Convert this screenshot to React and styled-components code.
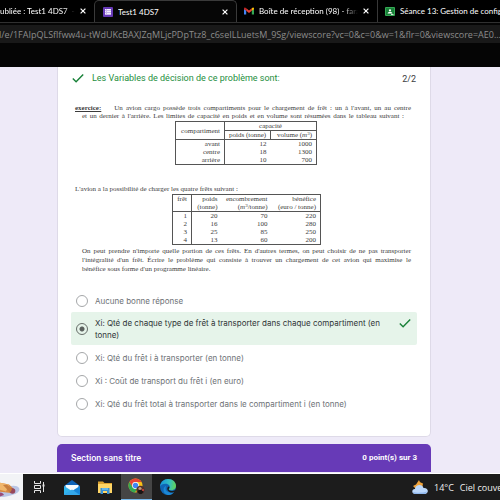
import React from "react";
import styled, { createGlobalStyle, css } from "styled-components";

const Global = createGlobalStyle`
  *, *::before, *::after { box-sizing: border-box; }
  body { margin: 0; background: #eeeaf8; font-family: Roboto, "Liberation Sans", sans-serif; }
  button { font: inherit; color: inherit; background: none; border: 0; padding: 0; }
  h1, h2, p { margin: 0; font-weight: 400; }
  svg { display: block; flex: none; }
`;

const Screen = styled.div`
  display: flex;
  flex-direction: column;
  min-height: 100vh;
  overflow: hidden;
`;

/* Browser chrome */
const Chrome = styled.header`
  flex: none;
  height: 67px;
  background: #050505;
  font-family: Lato, "Open Sans", sans-serif;
`;
const TabStrip = styled.nav`
  display: flex;
  height: 23px;
  overflow: hidden;
  background: #000;
  border-bottom: 1px solid #303030;
`;
const Tab = styled.div`
  display: flex;
  align-items: center;
  flex: none;
  width: ${(p) => p.$width}px;
  height: 23px;
  gap: 5px;
  padding: 0 ${(p) => p.$end ?? 8}px 1px ${(p) => p.$start ?? 8}px;
  color: #fff;
  ${(p) =>
    p.$active &&
    css`
      background: #060606;
      border: 1px solid #3a3a3a;
      border-bottom: 0;
      border-radius: 5px 5px 0 0;
    `}
  ${(p) => p.$divided && css`border-right: 1px solid #383838;`}
`;
const TabLabel = styled.button`
  flex: 1;
  min-width: 0;
  overflow: hidden;
  text-align: left;
  white-space: nowrap;
  font-size: 8px;
  line-height: 12px;
  ${(p) => p.$fade && css`mask-image: linear-gradient(90deg, #000 85%, transparent);`}
`;
const CloseButton = styled.button`
  display: flex;
  flex: none;
`;
const Address = styled.input`
  display: block;
  width: 100%;
  height: 18px;
  margin-top: 2px;
  padding: 0;
  border: 0;
  outline: 0;
  background: #191919;
  color: #8c8c8c;
  text-indent: -1px;
  font: 9px "Open Sans", "Noto Sans", sans-serif;
`;

/* Form */
const Page = styled.main`
  flex: 1;
  padding: 0 69px 0 57px;
  background: #eeeaf8;
  border-bottom: 1px solid #fff;
`;
const Card = styled.section`
  height: 370px;
  padding: 0 14px;
  background: #fff;
  border: 1px solid #dedae8;
  border-top: 0;
  border-radius: 0 0 5px 5px;
`;
const Question = styled.header`
  display: flex;
  align-items: center;
  gap: 8px;
  height: 22px;
`;
const QuestionTitle = styled.h1`
  flex: 1;
  font-size: 9px;
  line-height: 14px;
  color: #1e8e3e;
`;
const Score = styled.span`
  font-size: 9px;
  line-height: 14px;
  padding-top: 1px;
  color: #3c4043;
`;

const Exercise = styled.article`
  height: 200px;
  padding: 15px 5px 0 3px;
  font-family: "Liberation Serif", "Times New Roman", serif;
  font-size: 7px;
  line-height: 8px;
  color: #3c3c3c;
`;
const Passage = styled.p`
  margin-left: ${(p) => (p.$outdent ? 0 : 7)}px;
  ${(p) =>
    p.$open &&
    css`
      margin-top: 2px;
      line-height: 9px;
    `}
`;
const Line = styled.span`
  display: block;
  white-space: nowrap;
  padding-left: ${(p) => p.$indent || 0}px;
  padding-right: ${(p) => p.$short || 0}px;
  text-align-last: ${(p) => (p.$end ? "left" : "justify")};
`;
const Keyword = styled.b`
  margin-right: 10px;
  text-decoration: underline;
`;
const DataTable = styled.table`
  width: ${(p) => p.$width}px;
  margin: 1px auto 0 ${(p) => p.$left}px;
  border: 1px solid #555;
  border-collapse: collapse;
  table-layout: fixed;
  line-height: 8px;
  text-align: right;
  th, td { padding: 0 4px; font-weight: 400; white-space: nowrap; }
  thead { border-bottom: 1px solid #555; }
  th:first-child[scope], td:first-child { border-right: 1px solid #555; }
  sup { font-size: 5px; line-height: 0; vertical-align: 2px; }
`;
const GroupHead = styled.th`
  border-bottom: 1px solid #555;
  text-align: center;
`;
const Spaced = styled.div`
  margin-top: 20px;
`;

const Options = styled.fieldset`
  display: flex;
  flex-direction: column;
  margin: 0 -1px 0 -1px;
  padding: 0;
  border: 0;
`;
const Option = styled.label`
  display: flex;
  align-items: center;
  gap: 7px;
  min-height: 23px;
  padding: 0 5px;
  font-family: Inter, Roboto, sans-serif;
  font-size: 8px;
  line-height: 12px;
  color: #6e7276;
  ${(p) =>
    p.$chosen &&
    css`
      min-height: 33px;
      margin-bottom: 1px;
      background: #e6f4ea;
      border-radius: 2px;
      color: #303437;
    `}
`;
const OptionText = styled.span`
  flex: 1;
`;
const Radio = styled.input`
  appearance: none;
  flex: none;
  width: 12px;
  height: 12px;
  margin: 0;
  border: 1px solid #a5a7a9;
  border-radius: 50%;
  &:checked {
    border-color: #666d69;
    background: radial-gradient(circle, #5a605d 0 2px, transparent 3px);
  }
`;
const TickSlot = styled.span`
  align-self: flex-start;
  padding: 5px 1px 0 0;
`;
const SectionBar = styled.section`
  display: flex;
  align-items: center;
  justify-content: space-between;
  height: 28px;
  margin-top: 7px;
  padding: 0 14px;
  border-radius: 5px 5px 0 0;
  background: #673ab7;
  color: #fff;
  font-size: 9px;
  line-height: 14px;
`;
const SectionTitle = styled.h2`
  font-size: 9px;
  font-weight: 500;
`;
const Points = styled.strong`
  font-size: 8px;
`;

/* Taskbar */
const Taskbar = styled.footer`
  display: flex;
  align-items: stretch;
  flex: none;
  height: 26px;
  background: #1c1c1c;
  color: #eee;
  font-family: "Open Sans", "Noto Sans", sans-serif;
  font-size: 9px;
`;
const SearchArt = styled.div`
  width: 23px;
  background: #f2f3f6;
  overflow: hidden;
`;
const TaskButton = styled.button`
  display: flex;
  align-items: center;
  justify-content: center;
  width: ${(p) => p.$width || 32}px;
  ${(p) =>
    p.$active &&
    css`
      background: #454545;
      border-bottom: 1px solid #76b9ed;
    `}
`;
const Weather = styled.button`
  display: flex;
  align-items: center;
  gap: 6px;
  width: 88px;
  margin-left: auto;
  overflow: hidden;
  white-space: nowrap;
`;

const Tick = ({ color, size = 12 }) => (
  <svg width={size} height={size} viewBox="0 0 12 12" fill="none" stroke={color} strokeWidth="1.4" aria-hidden="true">
    <path d="M.8 6.4 4.1 9.7 11.2 2.4" />
  </svg>
);
const Cross = () => (
  <svg width="6" height="6" viewBox="0 0 6 6" stroke="#fff" strokeWidth="1.2" aria-hidden="true">
    <path d="m.6.6 4.8 4.8M5.4.6.6 5.4" />
  </svg>
);
const FormsIcon = () => (
  <svg width="10" height="10" viewBox="0 0 10 10" aria-hidden="true">
    <rect width="10" height="10" rx="1" fill="#673ab7" />
    <rect x="2" y="2" width="6" height="6" fill="#c9b5ec" />
    <path d="M2 2h1v1H2zm2 0h4v1H4zM2 4h1v1H2zm2 0h4v1H4zM2 6h1v1H2zm2 0h4v1H4z" fill="#f3edff" />
  </svg>
);
const GmailIcon = () => (
  <svg width="10" height="8" viewBox="0 0 10 8" aria-hidden="true">
    <path d="M0 1.5V7.5h2.2V3.3z" fill="#4285f4" />
    <path d="M10 1.5V7.5H7.8V3.3z" fill="#34a853" />
    <path d="M2.2 1.2 5 3.4l2.8-2.2v2.5L5 5.9 2.2 3.7z" fill="#ea4335" />
    <path d="M0 1.5C0 .2 1.2 0 2.2 1.2v2.5L0 2.2z" fill="#c5221f" />
    <path d="M10 1.5C10 .2 8.8 0 7.8 1.2v2.5L10 2.2z" fill="#fbbc04" />
  </svg>
);
const ClassroomIcon = () => (
  <svg width="10" height="9" viewBox="0 0 10 9" aria-hidden="true">
    <rect width="10" height="9" rx="1" fill="#34a853" />
    <rect x="1" y="1" width="8" height="7" fill="#188038" />
    <circle cx="5" cy="3.4" r="1.1" fill="#fff" />
    <path d="M2.6 6.5C2.8 4.6 7.2 4.6 7.4 6.5z" fill="#fff" />
    <path d="M6 8h2.5v-.8H6z" fill="#fff" />
  </svg>
);
const SearchPicture = () => (
  <svg width="23" height="26" viewBox="0 0 23 26" aria-hidden="true">
    <path d="M-6 19C3 13 16 9 19 14S8 24-6 23z" fill="#b9c5e5" />
    <path d="M-1 8.5 9 10.5l5 4.5-3 4-12-1.5z" fill="#d78a45" />
    <path d="m-1 8.5 10 2-3 7-7-2z" fill="#f0b66b" />
    <circle cx="12.5" cy="17" r="2.8" fill="#97485c" />
    <path d="m3 11 4-.5 5 5-2 3z" fill="#c77e3e" />
    <path d="M-1 19c2-1 4 0 5 2l-5 2z" fill="#9a4c78" />
  </svg>
);
const TaskViewIcon = () => (
  <svg width="12" height="12" viewBox="0 0 12 12" fill="none" stroke="#e4e4e4" aria-hidden="true">
    <path d="M1.5 0v2.5h6V0M1.5 12V9.5h6V12M1.5 4.5h6v3h-6zM10.5 1v10" strokeWidth="1" />
    <path d="M9.5 4.5h2" strokeWidth="2" />
  </svg>
);
const MailIcon = () => (
  <svg width="16" height="15" viewBox="0 0 16 15" aria-hidden="true">
    <path d="m0 6 8-6 8 6v9H0z" fill="#0c62b7" />
    <path d="M1.500 5h13v6h-13z" fill="#f5fafd" />
    <path d="m0 6 8 5-8 4z" fill="#32b5ef" />
    <path d="m16 6-8 5 8 4z" fill="#1685d8" />
    <path d="m0 15 8-5.5 8 5.5z" fill="#34a8eb" />
  </svg>
);
const FolderIcon = () => (
  <svg width="14" height="13" viewBox="0 0 14 13" aria-hidden="true">
    <path d="M0 .5h5l1.500 1.500H14v3H0z" fill="#dca331" />
    <path d="M0 3h14v9H0z" fill="#ffd666" />
    <path d="M2.500 7h9v6H9v-3H5v3H2.500z" fill="#3b91d3" />
    <path d="M4 7h6v2H4z" fill="#65b7ea" />
  </svg>
);
const ChromeIcon = () => (
  <svg width="17" height="17" viewBox="0 0 17 17" aria-hidden="true">
    <circle cx="7.5" cy="7.5" r="7" fill="#fbc116" />
    <path d="M1.4 4A7 7 0 0 1 13.6 4H7.5L4.5 9.2z" fill="#e94335" />
    <path d="M1.4 4A7 7 0 0 0 7 14.5l3-5.2H4.5z" fill="#35a853" />
    <circle cx="7.5" cy="7.5" r="3.4" fill="#fff" />
    <circle cx="7.5" cy="7.5" r="2.7" fill="#4285f4" />
    <circle cx="12.5" cy="12" r="4.2" fill="#51312a" />
    <circle cx="12" cy="10.5" r="1.6" fill="#c99981" />
    <path d="M9.5 14c1-3 4-3 6 0l-2 2h-2z" fill="#191615" />
    <path d="M14 11h2v2h-2z" fill="#b54036" />
  </svg>
);
const EdgeIcon = () => (
  <svg width="16" height="16" viewBox="0 0 16 16" aria-hidden="true">
    <defs>
      <linearGradient id="edgeWave" x1="0" y1=".4" x2="1" y2=".5">
        <stop stopColor="#1595dd" />
        <stop offset=".6" stopColor="#35c1bd" />
        <stop offset="1" stopColor="#65d453" />
      </linearGradient>
    </defs>
    <circle cx="8" cy="8" r="8" fill="#0f65b4" />
    <path d="M0 7.5C.6 2.9 4 0 8 0c5 0 8 3.4 8 6.8 0 3-2.3 4.5-4.8 4.5-2.3 0-2.7-.9-2-1.8C11 7 8.5 4.5 5.300 4.700 2.800 4.800.7 6 0 7.500z" fill="url(#edgeWave)" />
    <path d="M6.300 6.800C4 10.500 7 15 14 13.200c-1.600 2-4 3-6.200 2.800C2.800 15.500 2 8.500 6.300 6.800z" fill="#1b87d4" />
    <path d="M8.800 9.800C8 11 10 12.200 12.500 12c1.300-.1 2.400-.7 3.500-1.700V13h-1.500c-3.800 1.500-7.500-.5-7.200-3.500.1-1 .6-1.700 1.500-2 1 .9.700 1.600 0 2.300z" fill="#1c1c1c" />
  </svg>
);
const WeatherIcon = () => (
  <svg width="16" height="16" viewBox="0 0 16 16" aria-hidden="true">
    <path d="M7 1c.6 2 1.300 2.500 4 3.500L10 10H4L1 7l3-1.500z" fill="#f0a33a" />
    <path d="M3.500 15C-1 15-.4 9.800 3 10c.3-5 7.600-5.500 8.500-1C17 8.500 17.200 15 12.500 15z" fill="#bcd8fb" />
    <path d="M1 13c3 1 10 1 14-.5-.5 1.700-1.300 2.500-2.500 2.500h-9C2 15 1.200 14 1 13z" fill="#8fb7ed" />
  </svg>
);

const options = [
  { text: "Aucune bonne réponse" },
  { text: "Xi: Qté de chaque type de frêt à transporter dans chaque compartiment (en tonne)", chosen: true },
  { text: "Xi: Qté du frêt i à transporter (en tonne)" },
  { text: "Xi : Coût de transport du frêt i (en euro)" },
  { text: "Xi: Qté du frêt total à transporter dans le compartiment i (en tonne)" },
];
const holds = [["avant", 12, 1000], ["centre", 18, 1300], ["arrière", 10, 700]];
const freight = [[1, 20, 70, 220], [2, 16, 100, 280], [3, 25, 85, 250], [4, 13, 60, 200]];

const Rows = ({ data }) => (
  <tbody>
    {data.map((row) => (
      <tr key={row[0]}>{row.map((cell, i) => <td key={i}>{cell}</td>)}</tr>
    ))}
  </tbody>
);
const Close = () => <CloseButton aria-label="Fermer l'onglet"><Cross /></CloseButton>;

export default function App() {
  return (
    <Screen>
      <Global />
      <Chrome>
        <TabStrip aria-label="Onglets">
          <Tab $width={94} $start={0}><TabLabel $fade>ubliée : Test1 4DS7 &nbsp;-</TabLabel><Close /></Tab>
          <Tab $width={143} $active><FormsIcon /><TabLabel>Test1 4DS7</TabLabel><Close /></Tab>
          <Tab $width={141} $start={7} $divided><GmailIcon /><TabLabel $fade>Boîte de réception (98) - fara</TabLabel><Close /></Tab>
          <Tab $width={122} $start={7} $end={0}><ClassroomIcon /><TabLabel>Séance 13: Gestion de config</TabLabel></Tab>
        </TabStrip>
        <Address
          aria-label="Adresse"
          readOnly
          value="l/e/1FAIpQLSflfww4u-tWdUKcBAXJZqMLjcPDpTtz8_c6seILLuetsM_9Sg/viewscore?vc=0&c=0&w=1&flr=0&viewscore=AE0..."
        />
      </Chrome>

      <Page>
        <Card>
          <Question>
            <Tick color="#188038" />
            <QuestionTitle>Les Variables de décision de ce problème sont:</QuestionTitle>
            <Score>2/2</Score>
          </Question>

          <Exercise>
            <Passage $outdent>
              <Line><Keyword>exercice:</Keyword> Un avion cargo possède trois compartiments pour le chargement de frêt : un à l'avant, un au centre</Line>
              <Line $indent={7} $short={7}>et un dernier à l'arrière. Les limites de capacité en poids et en volume sont résumées dans le tableau suivant :</Line>
            </Passage>
            <DataTable $width={142} $left={100}>
              <colgroup><col width="49" /><col width="46" /><col /></colgroup>
              <thead>
                <tr><th rowSpan="2" scope="col">compartiment</th><GroupHead colSpan="2">capacité</GroupHead></tr>
                <tr><th scope="col">poids (tonne)</th><th>volume (<i>m</i><sup>3</sup>)</th></tr>
              </thead>
              <Rows data={holds} />
            </DataTable>
            <Spaced>
              <Passage $outdent>L'avion a la possibilité de charger les quatre frêts suivant :</Passage>
              <DataTable $width={149} $left={97}>
                <colgroup><col width="19" /><col width="30" /><col width="50" /><col /></colgroup>
                <thead>
                  <tr><th scope="col">frêt</th><th>poids</th><th>encombrement</th><th>bénéfice</th></tr>
                  <tr><th scope="col" aria-label="unité" /><th>(tonne)</th><th>(<i>m</i><sup>3</sup>/tonne)</th><th>(euro / tonne)</th></tr>
                </thead>
                <Rows data={freight} />
              </DataTable>
            </Spaced>
            <Passage $open>
              <Line>On peut prendre n'importe quelle portion de ces frêts. En d'autres termes, on peut choisir de ne pas transporter</Line>
              <Line>l'intégralité d'un frêt. Écrire le problème qui consiste à trouver un chargement de cet avion qui maximise le</Line>
              <Line $end>bénéfice sous forme d'un programme linéaire.</Line>
            </Passage>
          </Exercise>

          <Options aria-label="Réponses">
            {options.map(({ text, chosen }) => (
              <Option key={text} $chosen={chosen}>
                <Radio type="radio" name="answer" defaultChecked={chosen} />
                <OptionText>{text}</OptionText>
                {chosen && <TickSlot><Tick color="#188038" /></TickSlot>}
              </Option>
            ))}
          </Options>
        </Card>
        <SectionBar>
          <SectionTitle>Section sans titre</SectionTitle>
          <Points>0 point(s) sur 3</Points>
        </SectionBar>
      </Page>

      <Taskbar>
        <SearchArt><SearchPicture /></SearchArt>
        <TaskButton aria-label="Affichage des tâches"><TaskViewIcon /></TaskButton>
        <TaskButton aria-label="Courrier" $width={34}><MailIcon /></TaskButton>
        <TaskButton aria-label="Explorateur"><FolderIcon /></TaskButton>
        <TaskButton aria-label="Chrome" $width={31} $active><ChromeIcon /></TaskButton>
        <TaskButton aria-label="Edge"><EdgeIcon /></TaskButton>
        <Weather><WeatherIcon /><span>14°C</span><span>Ciel couve</span></Weather>
      </Taskbar>
    </Screen>
  );
}
